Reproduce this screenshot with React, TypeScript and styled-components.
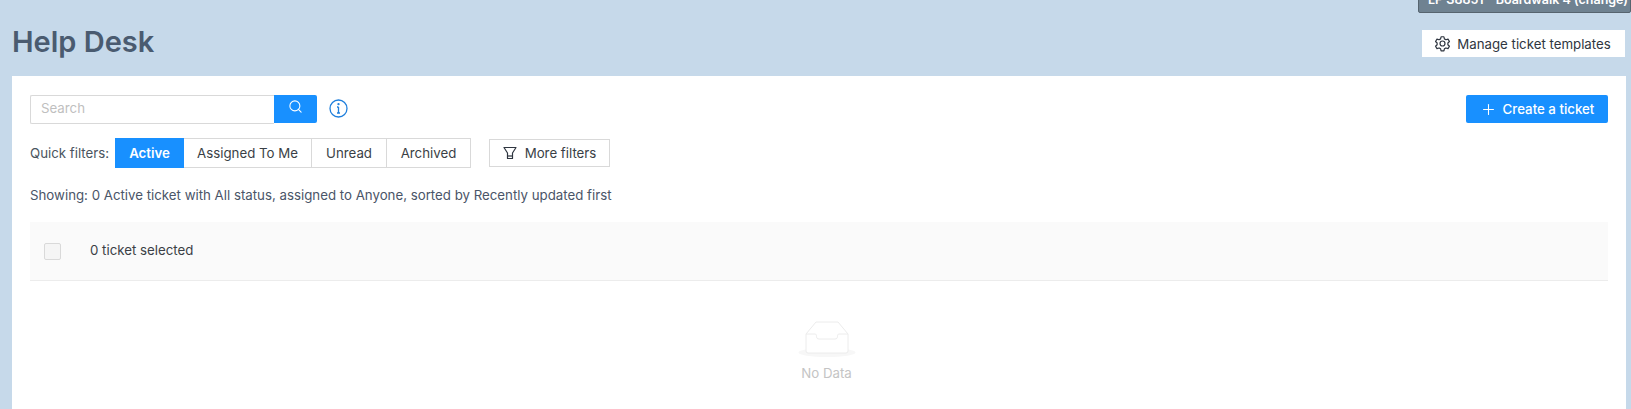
import React from "react";
import styled, { createGlobalStyle } from "styled-components";
import { Search, Plus } from "lucide-react";

const FONT = `Inter, Lato, sans-serif`;

const Global = createGlobalStyle`
  html, body { margin: 0; padding: 0; height: 409px; overflow: hidden; background: #c6d9ea; }
  body { font-family: ${FONT}; }
  * { box-sizing: border-box; }
`;

const Page = styled.div`
  position: relative;
  width: 1631px;
  height: 409px;
  overflow: hidden;
  background: #c6d9ea;
`;

const StoreBadge = styled.div`
  position: absolute;
  top: -11px;
  right: 0;
  width: 213px;
  height: 24px;
  padding-left: 9px;
  background: #6f8291;
  border: 1px solid #56646f;
  border-radius: 0 0 2px 2px;
  color: #fff;
  font-size: 12.5px;
  font-weight: 600;
  line-height: 19px;
  white-space: nowrap;
  overflow: hidden;
`;

const Header = styled.header`
  height: 76px;
  padding: 27px 6px 0 12px;
  display: flex;
  justify-content: space-between;
  align-items: flex-start;
`;

const Title = styled.h1`
  margin: 0;
  color: #4a5b70;
  font-size: 29px;
  font-weight: 600;
  line-height: 30px;
`;

const TemplatesButton = styled.button`
  width: 203px;
  height: 27px;
  margin-top: 3px;
  border: 0;
  background: #fff;
  color: #2f3640;
  font: 400 13.28px ${FONT};
  display: flex;
  align-items: center;
  justify-content: center;
  gap: 6px;
  padding: 0 2px 0 0;
`;

const Panel = styled.main`
  margin: 0 5px 0 12px;
  height: 333px;
  background: #fff;
  padding: 19px 18px 0 18px;
`;

const TopRow = styled.div`
  display: flex;
  align-items: center;
  height: 28px;
`;

const SearchInput = styled.div`
  width: 244px;
  height: 29px;
  border: 1px solid #d9d9d9;
  border-right: 0;
  border-radius: 2px 0 0 2px;
  color: #bfbfbf;
  font-size: 13.28px;
  line-height: 24px;
  padding-left: 10px;
`;

const SearchButton = styled.div`
  width: 43px;
  height: 28px;
  background: #1890ff;
  border-radius: 0 2px 2px 0;
  color: #fff;
  display: flex;
  align-items: center;
  justify-content: center;
  padding-bottom: 5px;
`;

const InfoIcon = styled.svg`
  margin: 0 0 2px 12px;
  color: #1f7fdc;
`;

const CreateButton = styled.button`
  margin-left: auto;
  width: 142px;
  height: 28px;
  border: 0;
  border-radius: 2px;
  background: #1890ff;
  color: #fff;
  font: 500 13.28px ${FONT};
  display: flex;
  align-items: center;
  justify-content: center;
  gap: 6px;
  padding: 0;
`;

const FilterRow = styled.div`
  display: flex;
  align-items: center;
  margin-top: 15px;
  height: 30px;
`;

const FilterLabel = styled.span`
  width: 85px;
  color: #4a5560;
  font-size: 13.28px;
`;

const FilterGroup = styled.div`
  display: flex;
  height: 30px;
`;

const FilterTab = styled.div<{ $active?: boolean; $w: number }>`
  width: ${(p) => p.$w}px;
  height: 30px;
  display: flex;
  align-items: center;
  justify-content: center;
  font-size: 13.28px;
  font-weight: ${(p) => (p.$active ? 600 : 400)};
  color: ${(p) => (p.$active ? "#fff" : "#3a3f46")};
  background: ${(p) => (p.$active ? "#1890ff" : "#fff")};
  border: 1px solid ${(p) => (p.$active ? "#1890ff" : "#d9d9d9")};
  border-left-width: ${(p) => (p.$active ? 1 : 0)}px;
`;

const MoreFilters = styled.button`
  margin-left: 18px;
  width: 121px;
  height: 28px;
  border: 1px solid #d9d9d9;
  background: #fff;
  color: #3a3f46;
  font: 400 13.28px ${FONT};
  display: flex;
  align-items: center;
  justify-content: center;
  gap: 8px;
  padding: 0;
`;

const Summary = styled.p`
  margin: 18px 0 0;
  color: #4a5568;
  font-size: 13.28px;
  line-height: 18px;
`;

const TableHead = styled.div`
  margin-top: 18px;
  height: 59px;
  background: #fafafa;
  border-bottom: 1px solid #ececec;
  display: flex;
  align-items: center;
  padding-left: 14px;
`;

const Checkbox = styled.span`
  width: 17px;
  height: 17px;
  background: #f5f5f5;
  border: 1px solid #d9d9d9;
  border-radius: 2px;
`;

const SelectedText = styled.span`
  margin-left: 29px;
  margin-bottom: 2px;
  color: #3a3f46;
  font-size: 13.28px;
`;

const Empty = styled.div`
  margin-top: 40px;
  padding-left: 15px;
  display: flex;
  flex-direction: column;
  align-items: center;
`;

const EmptyText = styled.div`
  margin-top: 6px;
  color: #c4c4c4;
  font-size: 13.28px;
  line-height: 18px;
`;

const GearIcon = () => (
  <svg width="17" height="17" viewBox="0 0 24 24" fill="none" stroke="#2f3640" strokeWidth="1.7" strokeLinejoin="round">
    <path d="M10 2.500h4l.7 3 2.100 1.200 3-.9 2 3.400-2.200 2.100v2.400l2.200 2.100-2 3.400-3-.9-2.100 1.200-.7 3h-4l-.7-3-2.100-1.200-3 .9-2-3.400 2.200-2.100v-2.400L2.200 9.200l2-3.400 3 .9 2.100-1.200z" />
    <circle cx="12" cy="12" r="3.500" />
  </svg>
);

const FunnelIcon = () => (
  <svg width="14" height="14" viewBox="0 0 14 14" fill="none" stroke="#2f3640" strokeWidth="1.2" strokeLinejoin="round">
    <path d="M1 1.500h12L9.500 7v5.500h-5V7z" />
    <path d="M4.500 10h5" />
  </svg>
);

const InboxIcon = () => (
  <svg width="58" height="37" viewBox="0 0 58 37" fill="none">
    <ellipse cx="29" cy="31.500" rx="28.500" ry="4.500" fill="#f7f7f7" />
    <path d="M8 13 18 1h22l10 12v17a2 2 0 0 1-2 2H10a2 2 0 0 1-2-2z" fill="#fff" stroke="#ececec" />
    <path d="M8 13h9c1 0 1.500 1 1.500 2.500S19.500 18 21 18h16c1.500 0 2.500-1 2.500-2.500S40 13 41 13h9" stroke="#ececec" />
  </svg>
);

export default function App() {
  return (
    <Page>
      <Global />
      <StoreBadge>LP S8851 - Boardwalk 4 (change)</StoreBadge>
      <Header>
        <Title>Help Desk</Title>
        <TemplatesButton>
          <GearIcon />
          Manage ticket templates
        </TemplatesButton>
      </Header>
      <Panel>
        <TopRow>
          <SearchInput>Search</SearchInput>
          <SearchButton>
            <Search size={15} strokeWidth={1.7} />
          </SearchButton>
          <InfoIcon width="19" height="19" viewBox="0 0 19 19" fill="none" stroke="currentColor" strokeWidth="1.3">
            <circle cx="9.500" cy="9.500" r="8.500" />
            <path d="M9.500 8v6M8 8h1.500M8 14h3" />
            <circle cx="9.500" cy="5.200" r=".5" />
          </InfoIcon>
          <CreateButton>
            <Plus size={17} strokeWidth={1.5} />
            Create a ticket
          </CreateButton>
        </TopRow>
        <FilterRow>
          <FilterLabel>Quick filters:</FilterLabel>
          <FilterGroup>
            <FilterTab $active $w={69}>Active</FilterTab>
            <FilterTab $w={128}>Assigned To Me</FilterTab>
            <FilterTab $w={75}>Unread</FilterTab>
            <FilterTab $w={84}>Archived</FilterTab>
          </FilterGroup>
          <MoreFilters>
            <FunnelIcon />
            More filters
          </MoreFilters>
        </FilterRow>
        <Summary>Showing: 0 Active ticket with All status, assigned to Anyone, sorted by Recently updated first</Summary>
        <TableHead>
          <Checkbox />
          <SelectedText>0 ticket selected</SelectedText>
        </TableHead>
        <Empty>
          <InboxIcon />
          <EmptyText>No Data</EmptyText>
        </Empty>
      </Panel>
    </Page>
  );
}
